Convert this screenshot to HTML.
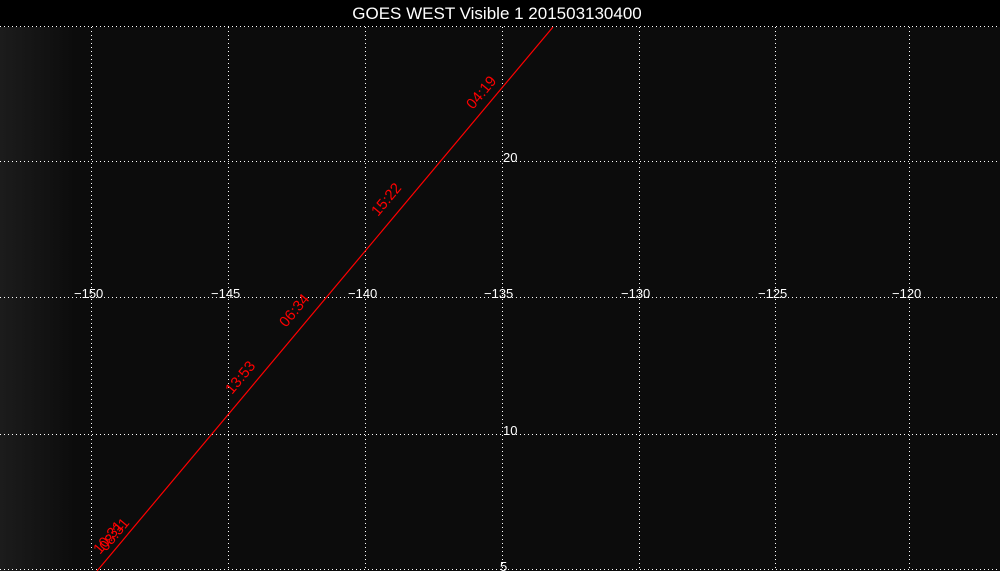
<!DOCTYPE html>
<html><head><style>
html,body{margin:0;padding:0;background:#000;width:1000px;height:571px;overflow:hidden}
svg{display:block}
text{font-family:"Liberation Sans",sans-serif}
</style></head><body>
<svg width="1000" height="571" viewBox="0 0 1000 571">
<defs>
<linearGradient id="lg" x1="0" x2="1" y1="0" y2="0">
<stop offset="0" stop-color="#1c1c1c"/><stop offset="0.5" stop-color="#141414"/><stop offset="1" stop-color="#0c0c0c"/>
</linearGradient>
</defs>
<rect x="0" y="0" width="1000" height="27" fill="#000"/>
<rect x="0" y="27" width="1000" height="544" fill="#0c0c0c"/>
<rect x="0" y="27" width="75" height="544" fill="url(#lg)"/>
<text x="497" y="19" fill="#fff" font-size="17" text-anchor="middle">GOES WEST Visible 1 201503130400</text>
<g stroke="#fff" stroke-width="1" stroke-dasharray="1,3" shape-rendering="crispEdges">
<line x1="0" y1="26.5" x2="1000" y2="26.5"/>
<line x1="0" y1="161.5" x2="1000" y2="161.5"/>
<line x1="0" y1="297.5" x2="1000" y2="297.5"/>
<line x1="0" y1="434.5" x2="1000" y2="434.5"/>
<line x1="0" y1="569.5" x2="1000" y2="569.5"/>
<line x1="91.5" y1="27" x2="91.5" y2="571"/>
<line x1="228.5" y1="27" x2="228.5" y2="571"/>
<line x1="365.5" y1="27" x2="365.5" y2="571"/>
<line x1="502.5" y1="27" x2="502.5" y2="571"/>
<line x1="639.5" y1="27" x2="639.5" y2="571"/>
<line x1="775.5" y1="27" x2="775.5" y2="571"/>
<line x1="909.5" y1="27" x2="909.5" y2="571"/>
</g>
<g fill="#fff" font-size="13">
<text x="74" y="298">−150</text>
<text x="211" y="298">−145</text>
<text x="348" y="298">−140</text>
<text x="484" y="298">−135</text>
<text x="621" y="298">−130</text>
<text x="758" y="298">−125</text>
<text x="892" y="298">−120</text>
<text x="503" y="162">20</text>
<text x="503" y="435">10</text>
<text x="500" y="571">5</text>
</g>
<line x1="97" y1="571" x2="553" y2="27" stroke="#ff0000" stroke-width="1.2"/>
<g fill="#ff0000" font-size="15">
<text transform="translate(473,110) rotate(-50)">04:19</text>
<text transform="translate(378,217) rotate(-50)">15:22</text>
<text transform="translate(286,328) rotate(-50)">06:34</text>
<text transform="translate(232,395) rotate(-50)">13:53</text>
<text transform="translate(100,555) rotate(-50)">10:31</text>
<text transform="translate(106,552) rotate(-50)">08:31</text>
</g>
</svg>
</body></html>
